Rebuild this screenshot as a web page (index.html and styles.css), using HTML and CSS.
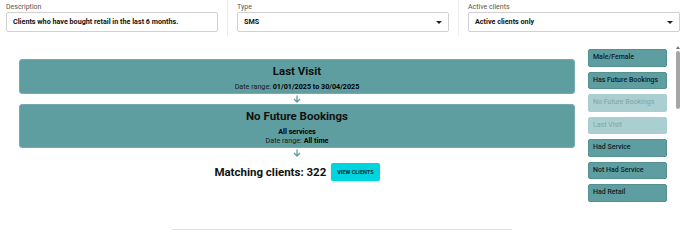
FILE: index.html
```html
<!DOCTYPE html>
<html lang="en">
<head>
    <meta charset="UTF-8">
    <meta name="viewport" content="width=device-width, initial-scale=1.0">
    <title>Client Segment</title>
    <link rel="stylesheet" href="styles.css">
</head>
<body>
    <div class="fields">
        <div class="field">
            <label class="field-label">Description</label>
            <div class="field-box">Clients who have bought retail in the last 6 months.</div>
        </div>
        <div class="divider"></div>
        <div class="field">
            <label class="field-label">Type</label>
            <div class="field-box">SMS <span class="caret"></span></div>
        </div>
        <div class="divider"></div>
        <div class="field">
            <label class="field-label">Active clients</label>
            <div class="field-box">Active clients only <span class="caret"></span></div>
        </div>
    </div>

    <div class="main">
        <div class="flow">
            <div class="card">
                <div class="card-title">Last Visit</div>
                <div class="card-line">Date range: <b>01/01/2025 to 30/04/2025</b></div>
            </div>
            <div class="arrow">
                <svg width="8" height="8" viewBox="0 0 8 8"><path d="M4 0.5V7M1 4l3 3 3-3" fill="none" stroke="#5f9ea0" stroke-width="1.3"/></svg>
            </div>
            <div class="card">
                <div class="card-title">No Future Bookings</div>
                <div class="card-line"><b>All services</b></div>
                <div class="card-line next">Date range: <b>All time</b></div>
            </div>
            <div class="arrow">
                <svg width="8" height="8" viewBox="0 0 8 8"><path d="M4 0.5V7M1 4l3 3 3-3" fill="none" stroke="#5f9ea0" stroke-width="1.3"/></svg>
            </div>
            <div class="result">
                <span class="result-text">Matching clients: 322</span>
                <button class="view-btn">VIEW CLIENTS</button>
            </div>
        </div>

        <div class="sidebar">
            <div class="rules">
                <div class="rule">Male/Female</div>
                <div class="rule">Has Future Bookings</div>
                <div class="rule disabled">No Future Bookings</div>
                <div class="rule disabled">Last Visit</div>
                <div class="rule">Had Service</div>
                <div class="rule">Not Had Service</div>
                <div class="rule">Had Retail</div>
            </div>
            <div class="scrollbar">
                <span class="scroll-up"></span>
                <span class="scroll-thumb"></span>
            </div>
        </div>
    </div>

    <div class="footer-line"></div>
</body>
</html>
```

FILE: styles.css
```css
body {
    margin: 0;
    padding: 0;
    font-family: Roboto, "Liberation Sans", Arial, sans-serif;
    background-color: #fff;
    color: #111;
}

.fields {
    display: flex;
    padding: 0 8px 0 6px;
    height: 36px;
}

.field {
    width: 212px;
    padding-top: 3px;
}

.field-label {
    display: block;
    font-size: 7px;
    line-height: 8px;
    color: #555;
    margin-bottom: 1px;
}

.field-box {
    position: relative;
    box-sizing: border-box;
    height: 20px;
    border: 1px solid #d0d0d0;
    border-radius: 2px;
    padding: 0 6px;
    font-size: 7.2px;
    font-weight: 700;
    line-height: 18px;
    color: #111;
}

.caret {
    position: absolute;
    right: 6px;
    top: 8px;
    width: 0;
    height: 0;
    border-left: 3px solid transparent;
    border-right: 3px solid transparent;
    border-top: 3px solid #222;
}

.divider {
    width: 1px;
    background-color: #ececec;
    margin: 0 9px;
}

.main {
    display: flex;
    padding-left: 19px;
}

.flow {
    width: 556px;
    padding-top: 23px;
    display: flex;
    flex-direction: column;
    align-items: center;
}

.card {
    box-sizing: border-box;
    width: 100%;
    background-color: #5f9ea0;
    border: 1px solid #74acae;
    border-radius: 3px;
    padding: 3px 0 2px;
    text-align: center;
}

.card-title {
    font-size: 11.5px;
    font-weight: 700;
    line-height: 16px;
    margin-bottom: 3px;
}

.card-line {
    font-size: 7.2px;
    line-height: 9px;
    color: #1a1a1a;
}

.card-line b {
    color: #000;
}

.card-line.next {
    margin-top: 0;
}

.arrow {
    height: 10px;
    display: flex;
    align-items: center;
    justify-content: center;
}

.result {
    display: flex;
    align-items: center;
    gap: 5px;
    margin-top: 5px;
}

.result-text {
    font-size: 11.5px;
    font-weight: 700;
}

.view-btn {
    height: 18px;
    padding: 0 6px;
    border: none;
    border-radius: 2px;
    background-color: #00d4de;
    font-family: Roboto, "Liberation Sans", Arial, sans-serif;
    font-size: 5.5px;
    font-weight: 700;
    color: #0a2a2e;
    box-shadow: 0 1px 2px rgba(0, 0, 0, 0.15);
}

.sidebar {
    display: flex;
    margin-left: 13px;
    margin-top: 13px;
}

.rules {
    width: 79px;
}

.rule {
    box-sizing: border-box;
    height: 17.5px;
    margin-bottom: 5px;
    background-color: #5f9ea0;
    border: 1px solid #54908f;
    border-radius: 2px;
    padding-left: 4px;
    font-size: 7px;
    font-weight: 500;
    line-height: 15.5px;
    color: #10201f;
    white-space: nowrap;
}

.rule.disabled {
    background-color: #a9cfd0;
    border-color: #a9cfd0;
    color: #7ea5a6;
    font-weight: 400;
}

.scrollbar {
    display: flex;
    flex-direction: column;
    align-items: center;
    width: 5px;
    margin-left: 8px;
    margin-top: -3px;
}

.scroll-up {
    width: 0;
    height: 0;
    border-left: 2px solid transparent;
    border-right: 2px solid transparent;
    border-bottom: 3px solid #777;
    margin-bottom: 2px;
}

.scroll-thumb {
    width: 4px;
    height: 58px;
    border-radius: 2px;
    background-color: #a6a6a6;
}

.footer-line {
    width: 340px;
    height: 1px;
    background-color: #dbe4e4;
    margin: 22px 0 0 172px;
}
```
